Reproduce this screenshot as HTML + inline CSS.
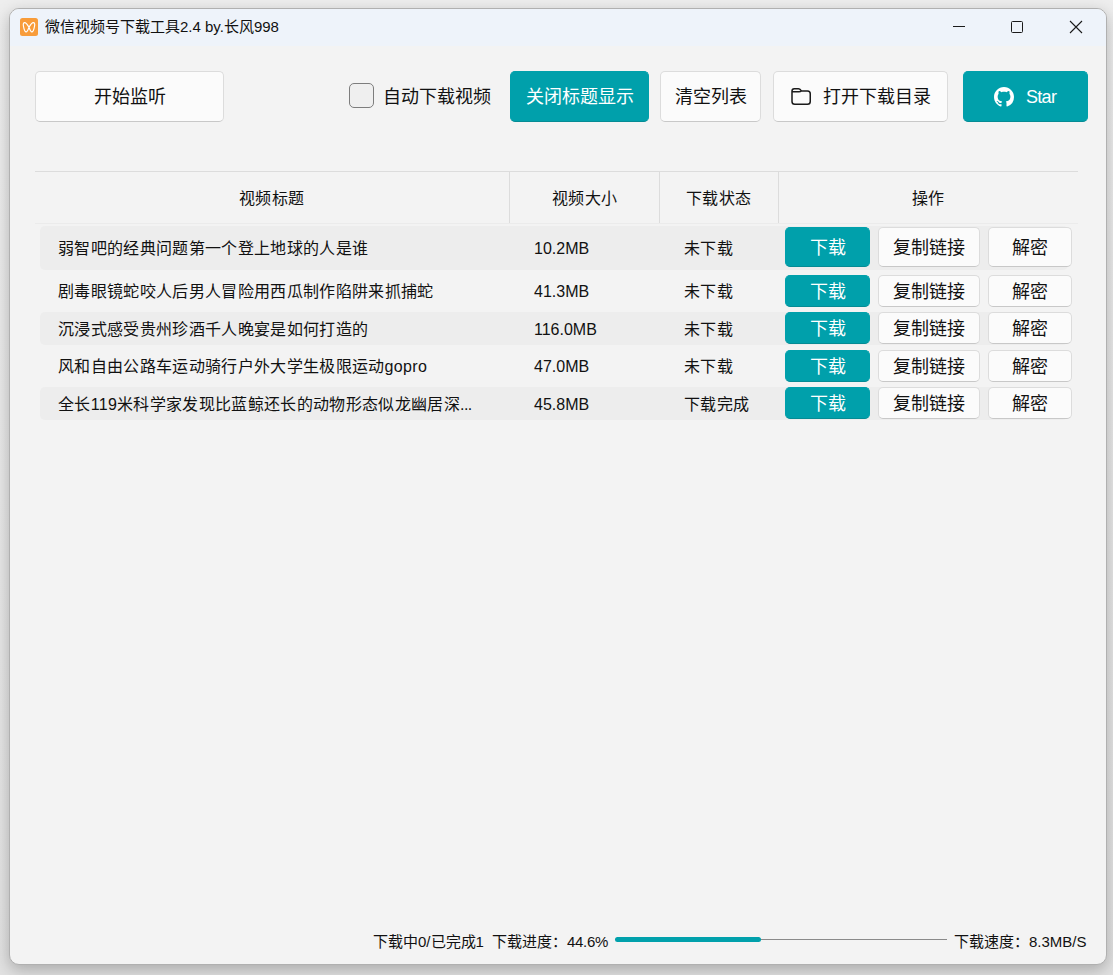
<!DOCTYPE html>
<html lang="zh-CN"><head><meta charset="utf-8"><title>微信视频号下载工具</title>
<style>
html,body{margin:0;padding:0;}
body{width:1113px;height:975px;overflow:hidden;position:relative;
 background:linear-gradient(180deg,#eeeeee 0px,#e2e2e2 975px);
 font-family:"Liberation Sans",sans-serif;color:#111;font-weight:500;}
.win{position:absolute;left:9px;top:8px;width:1096px;height:955px;border:1px solid #b0b0b0;border-radius:10px;
 background:#f3f3f3;overflow:hidden;box-shadow:0 5px 16px rgba(0,0,0,0.25);}
.titlebar{position:absolute;left:0;top:0;width:1096px;height:37px;background:#eef3fa;}
.a{position:absolute;white-space:nowrap;}
.btn{position:absolute;box-sizing:border-box;border:1px solid #dcdcdc;border-bottom-color:#c8c8c8;background:#fbfbfb;border-radius:5px;}
.teal{background:#00a0ab;border-color:#00a0ab;border-bottom-color:#058b94;}
.t18{position:absolute;white-space:nowrap;font-size:18px;line-height:18px;}
.t16{position:absolute;white-space:nowrap;font-size:16px;line-height:16px;}
.t15{position:absolute;white-space:nowrap;font-size:15px;line-height:15px;}
.w{color:#fff;font-weight:400;}
</style></head>
<body>
<div class="win"><div class="titlebar"></div></div>
<svg class="a" style="left:20px;top:18px" width="18" height="18" viewBox="0 0 18 18">
<rect x="0" y="0" width="18" height="18" rx="2.5" fill="#f89c3a"/>
<path d="M9 9.3 C7.5 6.7 6.1 4.6 4.7 4.6 C3.3 4.6 3.1 6.2 3.4 7.8 C3.9 10.7 5 13.9 6.2 13.9 C7.2 13.9 8.2 11.5 9 9.3 Z M9 9.3 C10.5 6.7 11.9 4.6 13.3 4.6 C14.7 4.6 14.9 6.2 14.6 7.8 C14.1 10.7 13 13.9 11.8 13.9 C10.8 13.9 9.8 11.5 9 9.3 Z" fill="none" stroke="#fff" stroke-width="1.15"/>
</svg>
<div class="t15" style="left:45px;top:19px;">微信视频号下载工具2.4 by.长风998</div>
<div class="a" style="left:953px;top:26px;width:12px;height:1px;background:#1a1a1a"></div>
<div class="a" style="left:1011px;top:21px;width:10px;height:10px;border:1px solid #1a1a1a;border-radius:1.5px"></div>
<svg class="a" style="left:1069px;top:20px" width="14" height="14" viewBox="0 0 14 14"><path d="M1 1 L13 13 M13 1 L1 13" stroke="#1a1a1a" stroke-width="1.1"/></svg>
<div class="btn" style="left:35px;top:71px;width:189px;height:51px;"></div>
<div class="t18" style="left:94px;top:87.5px;">开始监听</div>
<div class="a" style="left:349px;top:83px;width:25px;height:25px;box-sizing:border-box;border:1.3px solid #7d7d7d;border-radius:5px;background:#efefef"></div>
<div class="t18" style="left:383px;top:87.5px;">自动下载视频</div>
<div class="btn teal" style="left:510px;top:71px;width:139px;height:51px;"></div>
<div class="t18 w" style="left:526px;top:87.5px;">关闭标题显示</div>
<div class="btn" style="left:660px;top:71px;width:101px;height:51px;"></div>
<div class="t18" style="left:675px;top:87.5px;">清空列表</div>
<div class="btn" style="left:773px;top:71px;width:175px;height:51px;"></div>
<svg class="a" style="left:790px;top:87px" width="22" height="20" viewBox="0 0 22 20"><path d="M2 4.7 V14.5 Q2 17.25 4.75 17.25 H17.5 Q20.25 17.25 20.25 14.5 V6.75 Q20.25 4 17.5 4 H11.5 L10.6 3 Q9.8 1.65 8.5 1.65 H4.25 Q2 1.65 2 3.9 Z M2 4.7 H9 Q10.5 4.7 11.5 4" fill="none" stroke="#1a1a1a" stroke-width="1.5" stroke-linejoin="round"/></svg>
<div class="t18" style="left:823px;top:87.5px;">打开下载目录</div>
<div class="btn teal" style="left:963px;top:71px;width:125px;height:51px;"></div>
<svg class="a" style="left:994px;top:87px" width="20" height="20" viewBox="0 0 16 16"><path fill="#fff" d="M8 0C3.58 0 0 3.58 0 8c0 3.54 2.29 6.53 5.47 7.59.4.07.55-.17.55-.38 0-.19-.01-.82-.01-1.49-2.01.37-2.53-.49-2.69-.94-.09-.23-.48-.94-.82-1.13-.28-.15-.68-.52-.01-.53.63-.01 1.08.58 1.23.82.72 1.21 1.87.87 2.33.66.07-.52.28-.87.51-1.07-1.78-.2-3.64-.89-3.64-3.95 0-.87.31-1.59.82-2.15-.08-.2-.36-1.02.08-2.12 0 0 .67-.21 2.2.82.64-.18 1.32-.27 2-.27.68 0 1.36.09 2 .27 1.53-1.04 2.2-.82 2.2-.82.44 1.1.16 1.92.08 2.12.51.56.82 1.27.82 2.15 0 3.07-1.87 3.75-3.65 3.95.29.25.54.73.54 1.48 0 1.07-.01 1.93-.01 2.2 0 .21.15.46.55.38A8.013 8.013 0 0016 8c0-4.42-3.58-8-8-8z"/></svg>
<div class="t18 w" style="left:1026px;top:87.5px;letter-spacing:-0.7px;">Star</div>
<div class="a" style="left:35px;top:171px;width:1043px;height:1px;background:#dcdcdc"></div>
<div class="a" style="left:35px;top:223px;width:1043px;height:1px;background:#ebebeb"></div>
<div class="a" style="left:509px;top:172px;width:1px;height:51px;background:#dcdcdc"></div>
<div class="a" style="left:659px;top:172px;width:1px;height:51px;background:#dcdcdc"></div>
<div class="a" style="left:778px;top:172px;width:1px;height:51px;background:#dcdcdc"></div>
<div class="t16" style="left:239px;top:191px;letter-spacing:0.3px">视频标题</div>
<div class="t16" style="left:552px;top:191px;letter-spacing:0.3px">视频大小</div>
<div class="t16" style="left:686px;top:191px;letter-spacing:0.3px">下载状态</div>
<div class="t16" style="left:912px;top:191px;letter-spacing:0.3px">操作</div>
<div class="a" style="left:40px;top:226px;width:1028px;height:44px;border-radius:5px;background:#ededed"></div>
<div class="t16" style="left:58px;top:240.5px;letter-spacing:0.33px">弱智吧的经典问题第一个登上地球的人是谁</div>
<div class="t16" style="left:534px;top:240.5px;">10.2MB</div>
<div class="t16" style="left:684px;top:240.5px;letter-spacing:0.3px">未下载</div>
<div class="btn teal" style="left:785px;top:227px;width:85px;height:40px;"></div>
<div class="btn" style="left:878px;top:227px;width:102px;height:40px;"></div>
<div class="btn" style="left:988px;top:227px;width:84px;height:40px;"></div>
<div class="t18 w" style="left:810px;top:238.5px;">下载</div>
<div class="t18" style="left:893px;top:238.5px;">复制链接</div>
<div class="t18" style="left:1012px;top:238.5px;">解密</div>
<div class="t16" style="left:58px;top:283.5px;letter-spacing:0.33px">剧毒眼镜蛇咬人后男人冒险用西瓜制作陷阱来抓捕蛇</div>
<div class="t16" style="left:534px;top:283.5px;">41.3MB</div>
<div class="t16" style="left:684px;top:283.5px;letter-spacing:0.3px">未下载</div>
<div class="btn teal" style="left:785px;top:275px;width:85px;height:32px;"></div>
<div class="btn" style="left:878px;top:275px;width:102px;height:32px;"></div>
<div class="btn" style="left:988px;top:275px;width:84px;height:32px;"></div>
<div class="t18 w" style="left:810px;top:282.5px;">下载</div>
<div class="t18" style="left:893px;top:282.5px;">复制链接</div>
<div class="t18" style="left:1012px;top:282.5px;">解密</div>
<div class="a" style="left:40px;top:312px;width:1028px;height:33px;border-radius:5px;background:#ededed"></div>
<div class="t16" style="left:58px;top:321.5px;letter-spacing:0.33px">沉浸式感受贵州珍酒千人晚宴是如何打造的</div>
<div class="t16" style="left:534px;top:321.5px;">116.0MB</div>
<div class="t16" style="left:684px;top:321.5px;letter-spacing:0.3px">未下载</div>
<div class="btn teal" style="left:785px;top:312px;width:85px;height:32px;"></div>
<div class="btn" style="left:878px;top:312px;width:102px;height:32px;"></div>
<div class="btn" style="left:988px;top:312px;width:84px;height:32px;"></div>
<div class="t18 w" style="left:810px;top:319.5px;">下载</div>
<div class="t18" style="left:893px;top:319.5px;">复制链接</div>
<div class="t18" style="left:1012px;top:319.5px;">解密</div>
<div class="t16" style="left:58px;top:358.5px;letter-spacing:0.33px">风和自由公路车运动骑行户外大学生极限运动gopro</div>
<div class="t16" style="left:534px;top:358.5px;">47.0MB</div>
<div class="t16" style="left:684px;top:358.5px;letter-spacing:0.3px">未下载</div>
<div class="btn teal" style="left:785px;top:350px;width:85px;height:32px;"></div>
<div class="btn" style="left:878px;top:350px;width:102px;height:32px;"></div>
<div class="btn" style="left:988px;top:350px;width:84px;height:32px;"></div>
<div class="t18 w" style="left:810px;top:357.5px;">下载</div>
<div class="t18" style="left:893px;top:357.5px;">复制链接</div>
<div class="t18" style="left:1012px;top:357.5px;">解密</div>
<div class="a" style="left:40px;top:387px;width:1028px;height:33px;border-radius:5px;background:#ededed"></div>
<div class="t16" style="left:58px;top:396.5px;letter-spacing:0.33px">全长119米科学家发现比蓝鲸还长的动物形态似龙幽居深<span style="letter-spacing:-0.6px">...</span></div>
<div class="t16" style="left:534px;top:396.5px;">45.8MB</div>
<div class="t16" style="left:684px;top:396.5px;letter-spacing:0.3px">下载完成</div>
<div class="btn teal" style="left:785px;top:387px;width:85px;height:32px;"></div>
<div class="btn" style="left:878px;top:387px;width:102px;height:32px;"></div>
<div class="btn" style="left:988px;top:387px;width:84px;height:32px;"></div>
<div class="t18 w" style="left:810px;top:394.5px;">下载</div>
<div class="t18" style="left:893px;top:394.5px;">复制链接</div>
<div class="t18" style="left:1012px;top:394.5px;">解密</div>
<div class="t15" style="left:373px;top:934px;">下载中0/已完成1</div>
<div class="t15" style="left:492px;top:934px;">下载进度：<span style="letter-spacing:-0.3px">44.6%</span></div>
<div class="a" style="left:616px;top:939px;width:331px;height:1px;background:#8a8a8a"></div>
<div class="a" style="left:615px;top:937px;width:146px;height:5px;border-radius:2.5px;background:#00a0ab"></div>
<div class="t15" style="left:954px;top:934px;">下载速度：8.3MB/S</div>
</body></html>
